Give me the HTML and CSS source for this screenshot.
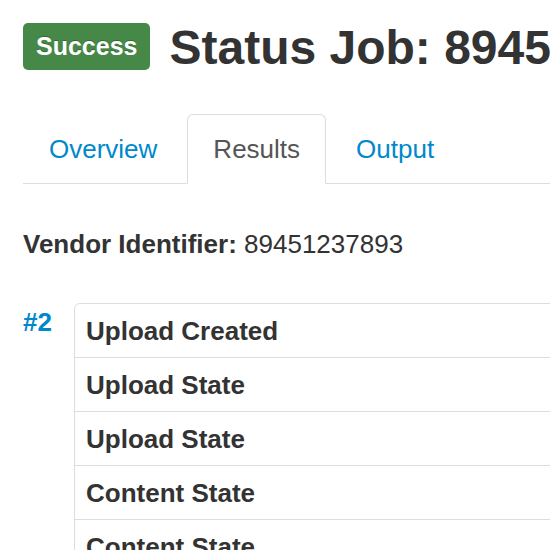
FILE: index.html
```html
<!DOCTYPE html>
<html>
<head>
<meta charset="utf-8">
<title>Status Job</title>
<link rel="stylesheet" href="styles.css">
</head>
<body>
<div class="page">
  <div class="header">
    <span class="label-success">Success</span>
    <h1 class="title">Status Job: 89451237893</h1>
  </div>
  <ul class="tabs">
    <li class="tab"><a href="#">Overview</a></li>
    <li class="tab active"><a href="#">Results</a></li>
    <li class="tab"><a href="#">Output</a></li>
  </ul>
  <p class="vendor"><strong>Vendor Identifier:</strong> 89451237893</p>
  <div class="result">
    <div class="result-num">#2</div>
    <table class="result-table">
      <tr><th>Upload Created</th><td></td></tr>
      <tr><th>Upload State</th><td></td></tr>
      <tr><th>Upload State</th><td></td></tr>
      <tr><th>Content State</th><td></td></tr>
      <tr><th>Content State</th><td></td></tr>
    </table>
  </div>
</div>
</body>
</html>
```
FILE: styles.css
```css
html, body {
  margin: 0;
  padding: 0;
  overflow: hidden;
  background: #fff;
}
body {
  font-family: "Liberation Sans", Arial, Helvetica, sans-serif;
  font-size: 26px;
  line-height: 37px;
  color: #333;
}
.page {
  width: 900px;
  padding: 20px 0 0 23px;
}
.header {
  display: flex;
  align-items: center;
  gap: 19px;
  white-space: nowrap;
}
.label-success {
  display: inline-block;
  height: 47px;
  line-height: 47px;
  padding: 0 13px;
  background: #468847;
  color: #fff;
  font-weight: bold;
  font-size: 25px;
  border-radius: 5px;
  text-shadow: 0 -1px 0 rgba(0, 0, 0, 0.25);
}
.title {
  margin: 1px 0 -1px 0;
  font-size: 48px;
  line-height: 53px;
  font-weight: bold;
  color: #333;
}
.tabs {
  list-style: none;
  margin: 41px 0 0 0;
  padding: 0;
  display: flex;
  border-bottom: 1px solid #ddd;
}
.tab {
  margin-right: 4px;
  margin-bottom: -1px;
}
.tab a {
  display: block;
  padding: 16px 25px 15px;
  line-height: 37px;
  border: 1px solid transparent;
  border-radius: 6px 6px 0 0;
  color: #0088cc;
  text-decoration: none;
}
.tab.active a {
  color: #555;
  background: #fff;
  border-color: #ddd #ddd transparent;
}
.vendor {
  margin: 42px 0 0 0;
}
.result {
  display: flex;
  margin-top: 40px;
}
.result-num {
  width: 51px;
  flex: none;
  color: #0088cc;
  font-weight: bold;
  margin-top: 1px;
}
.result-table {
  width: 700px;
  border: 1px solid #ddd;
  border-radius: 6px 0 0 0;
  border-collapse: separate;
  border-spacing: 0;
}
.result-table th,
.result-table td {
  padding: 9px 11px 7px;
  line-height: 37px;
  text-align: left;
  border-top: 1px solid #ddd;
}
.result-table tr:first-child th,
.result-table tr:first-child td {
  border-top: 0;
}
```
